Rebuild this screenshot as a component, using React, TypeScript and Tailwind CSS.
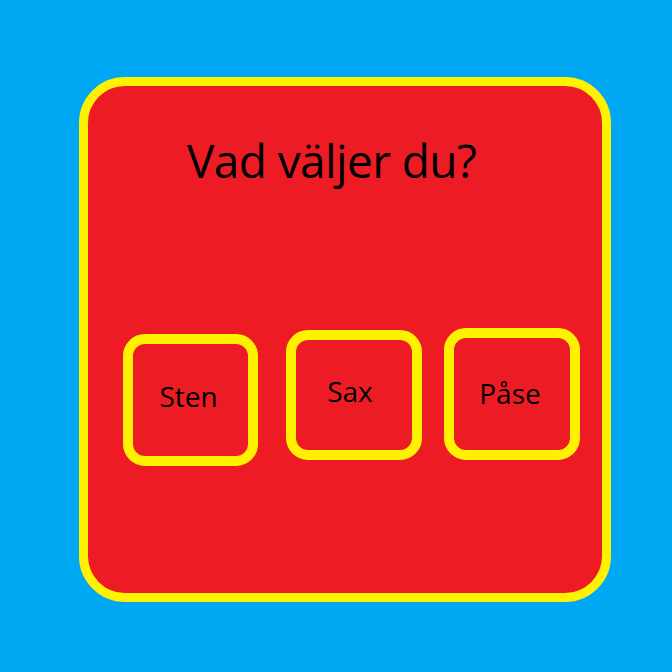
import React from 'react';

const choices = [
  { label: 'Sten', box: 'ml-[35px] mt-[6px] w-[135px] h-[132px]', text: 'pb-[8px] pr-[4px]' },
  { label: 'Sax', box: 'ml-[28px] mt-[2px] w-[136px] h-[130px]', text: 'pb-[8px] pr-[8px]' },
  { label: 'Påse', box: 'ml-[22px] mt-0 w-[136px] h-[132px]', text: 'pb-[2px] pr-[4px]' },
];

export default function App() {
  return (
    <div className="w-[672px] h-[672px] bg-[#00A8F3] pt-[77px] pl-[79px] font-['Open_Sans',sans-serif] text-black">
      {/* card */}
      <div className="w-[532px] h-[525px] border-[9px] border-[#FFF200] rounded-[46px] bg-[#ED1C24] flex flex-col">
        <h1 className="mt-[51px] ml-[99px] text-[46px] tracking-[-0.6px] leading-none font-normal">Vad väljer du?</h1>

        {/* choices */}
        <div className="mt-[145px] flex items-start">
          {choices.map((c) => (
            <button
              key={c.label}
              className={`${c.box} shrink-0 border-[10px] border-[#FFF200] rounded-[22px] flex items-center justify-center`}
            >
              <span className={`${c.text} text-[28px] leading-none`}>{c.label}</span>
            </button>
          ))}
        </div>
      </div>
    </div>
  );
}
